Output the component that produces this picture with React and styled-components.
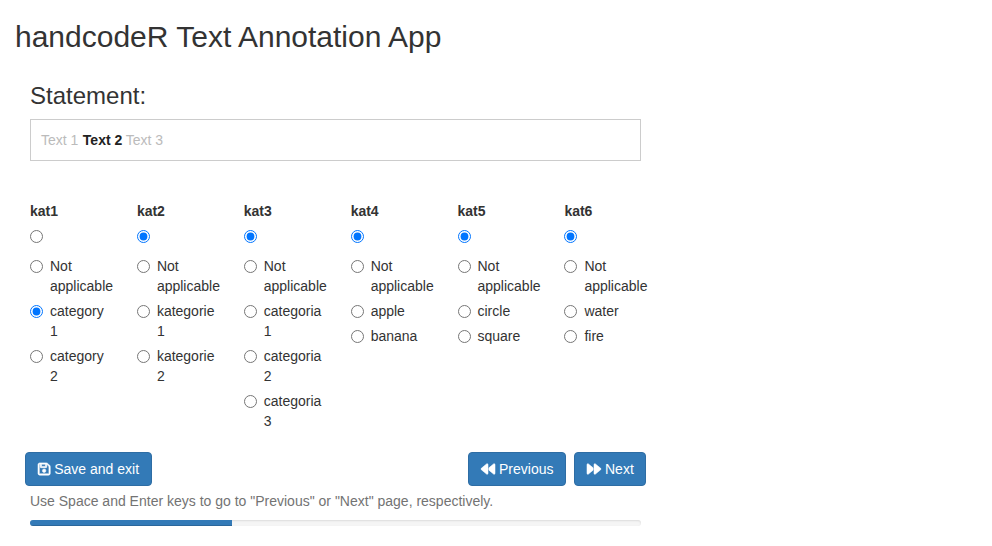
import React from 'react';
import styled, { createGlobalStyle, css } from 'styled-components';
import { FaBackward, FaForward, FaRegFloppyDisk } from 'react-icons/fa6';

const GlobalStyle = createGlobalStyle`
  *, *::before, *::after { box-sizing: border-box; }
  body {
    margin: 0;
    background: #fff;
    color: #333;
    font: 14px/20px "Liberation Sans", Arial, sans-serif;
  }
`;
const Page = styled.main`padding: 20px 15px 0;`;
const Title = styled.h2`
  margin: 0;
  font-size: 30px;
  line-height: 33px;
  font-weight: 400;
`;
const Panel = styled.div`
  width: 641px;
  padding: 30px 15px 0;
`;
const Subtitle = styled.h3`
  margin: 0 0 10px;
  font-size: 24px;
  line-height: 26px;
  font-weight: 400;
`;
const Statement = styled.div`
  height: 42px;
  padding: 10px;
  border: 1px solid #ccc;
  color: #bbb;
  strong {
    margin: 0 -.2px 0 .6px;
    color: #222;
  }
`;
const Categories = styled.div`
  display: grid;
  grid-template-columns: repeat(6, 106.89px);
  height: 251px;
  margin-top: 40px;
`;
const Category = styled.fieldset`
  min-width: 0;
  margin: 0;
  padding: 0 23px 0 0;
  border: 0;
`;
const CategoryName = styled.div`
  height: 25px;
  font-weight: 700;
`;
const Option = styled.label`
  display: flex;
  min-height: ${p => (p.$blank ? '25px' : '20px')};
  margin-bottom: 5px;
`;
const Radio = styled.input`
  flex: none;
  width: 13px;
  height: 13px;
  margin: 4px 7px 0 0;
`;
const Actions = styled.div`
  display: flex;
  gap: 8px;
  margin: 0 -5px;
`;
const Button = styled.button`
  display: flex;
  align-items: center;
  gap: 4px;
  width: ${p => p.$width}px;
  height: 34px;
  margin-left: ${p => (p.$end ? 'auto' : 0)};
  padding: 0 0 0 12px;
  border: 1px solid #2e6da4;
  border-radius: 4px;
  color: #fff;
  background: #337ab7;
  font: inherit;
  white-space: nowrap;
`;
const iconStyle = css`
  flex: none;
  width: 14px;
  height: 14px;
  overflow: visible;
  stroke: currentColor;
  stroke-width: 20px;
`;
const SaveIcon = styled(FaRegFloppyDisk)`
  ${iconStyle}
  width: 12.25px;
`;
const PreviousIcon = styled(FaBackward)`${iconStyle}`;
const NextIcon = styled(FaForward)`${iconStyle}`;
const Hint = styled.p`
  margin: 5px 0 9px;
  color: #737373;
`;
const Track = styled.div`
  height: 6px;
  overflow: hidden;
  border-radius: 4px;
  background: #f5f5f5;
  box-shadow: inset 0 1px 2px rgba(0, 0, 0, .1);
`;
const Progress = styled.div`
  width: 33%;
  height: 100%;
  background: #337ab7;
  box-shadow: inset 0 -1px 0 rgba(0, 0, 0, .15);
`;

const categories = [
  { name: 'kat1', options: ['category 1', 'category 2'], selected: 'category 1' },
  { name: 'kat2', options: ['kategorie 1', 'kategorie 2'], selected: '' },
  { name: 'kat3', options: ['categoria 1', 'categoria 2', 'categoria 3'], selected: '' },
  { name: 'kat4', options: ['apple', 'banana'], selected: '' },
  { name: 'kat5', options: ['circle', 'square'], selected: '' },
  { name: 'kat6', options: ['water', 'fire'], selected: '' },
];

export default function App() {
  return (
    <>
      <GlobalStyle />
      <Page>
        <Title>handcodeR Text Annotation App</Title>
        <Panel>
          <Subtitle>Statement:</Subtitle>
          <Statement>Text 1 <strong>Text 2</strong> Text 3</Statement>
          <Categories>
            {categories.map(({ name, options, selected }) => (
              <Category key={name}>
                <CategoryName>{name}</CategoryName>
                {['', 'Not applicable', ...options].map(option => (
                  <Option key={option} $blank={!option}>
                    <Radio type="radio" name={name} value={option} defaultChecked={option === selected} />
                    {option}
                  </Option>
                ))}
              </Category>
            ))}
          </Categories>
          <Actions>
            <Button $width={127}><SaveIcon />Save and exit</Button>
            <Button $width={98} $end><PreviousIcon />Previous</Button>
            <Button $width={72}><NextIcon />Next</Button>
          </Actions>
          <Hint>Use Space and Enter keys to go to "Previous" or "Next" page, respectively.</Hint>
          <Track><Progress /></Track>
        </Panel>
      </Page>
    </>
  );
}
